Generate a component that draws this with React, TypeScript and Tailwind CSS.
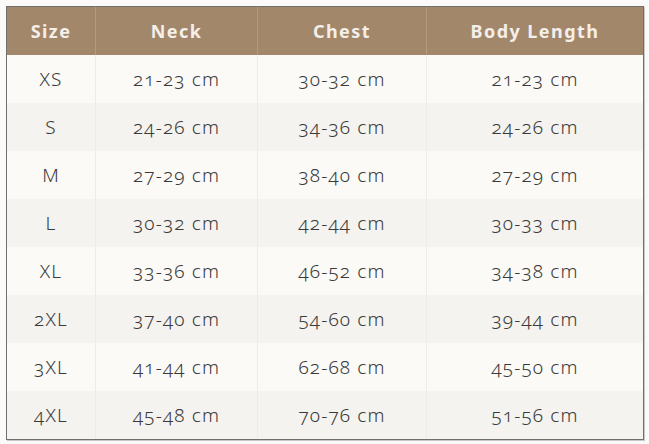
import React from "react";

const rows = [
  ["XS", "21-23 cm", "30-32 cm", "21-23 cm"],
  ["S", "24-26 cm", "34-36 cm", "24-26 cm"],
  ["M", "27-29 cm", "38-40 cm", "27-29 cm"],
  ["L", "30-32 cm", "42-44 cm", "30-33 cm"],
  ["XL", "33-36 cm", "46-52 cm", "34-38 cm"],
  ["2XL", "37-40 cm", "54-60 cm", "39-44 cm"],
  ["3XL", "41-44 cm", "62-68 cm", "45-50 cm"],
  ["4XL", "45-48 cm", "70-76 cm", "51-56 cm"],
];

const cols = "grid grid-cols-[89px_162px_169px_216px]";

export default function App() {
  return (
    <div
      className="w-[649px] h-[444px] bg-[#fbfaf8] pt-[6px] pl-[6px]"
      style={{ fontFamily: '"Noto Sans", "Open Sans", sans-serif' }}
    >
      <div className="w-[638px] border border-[#6f6f6f] shadow-[1px_1px_0_#c8c8c8]">
        <div className={`${cols} h-[48px] bg-[#a3876b] text-[#f4efe9] font-bold text-[18px] tracking-[0.08em]`}>
          {["Size", "Neck", "Chest", "Body Length"].map((h, i) => (
            <div
              key={h}
              className={`flex items-center justify-center ${i < 3 ? "border-r border-[#b39a80]" : ""}`}
            >
              {h}
            </div>
          ))}
        </div>
        {rows.map((r, ri) => (
          <div
            key={ri}
            className={`${cols} h-[48px] ${ri % 2 === 0 ? "bg-[#fbfaf7]" : "bg-[#f4f3ef]"} text-[#3a3a3a] text-[19px] font-light tracking-[0.06em]`}
            style={{ fontVariantNumeric: "oldstyle-nums" }}
          >
            {r.map((c, i) => (
              <div
                key={i}
                className={`flex items-center justify-center ${i < 3 ? "border-r border-[#efece6]" : ""}`}
              >
                {c}
              </div>
            ))}
          </div>
        ))}
      </div>
    </div>
  );
}
